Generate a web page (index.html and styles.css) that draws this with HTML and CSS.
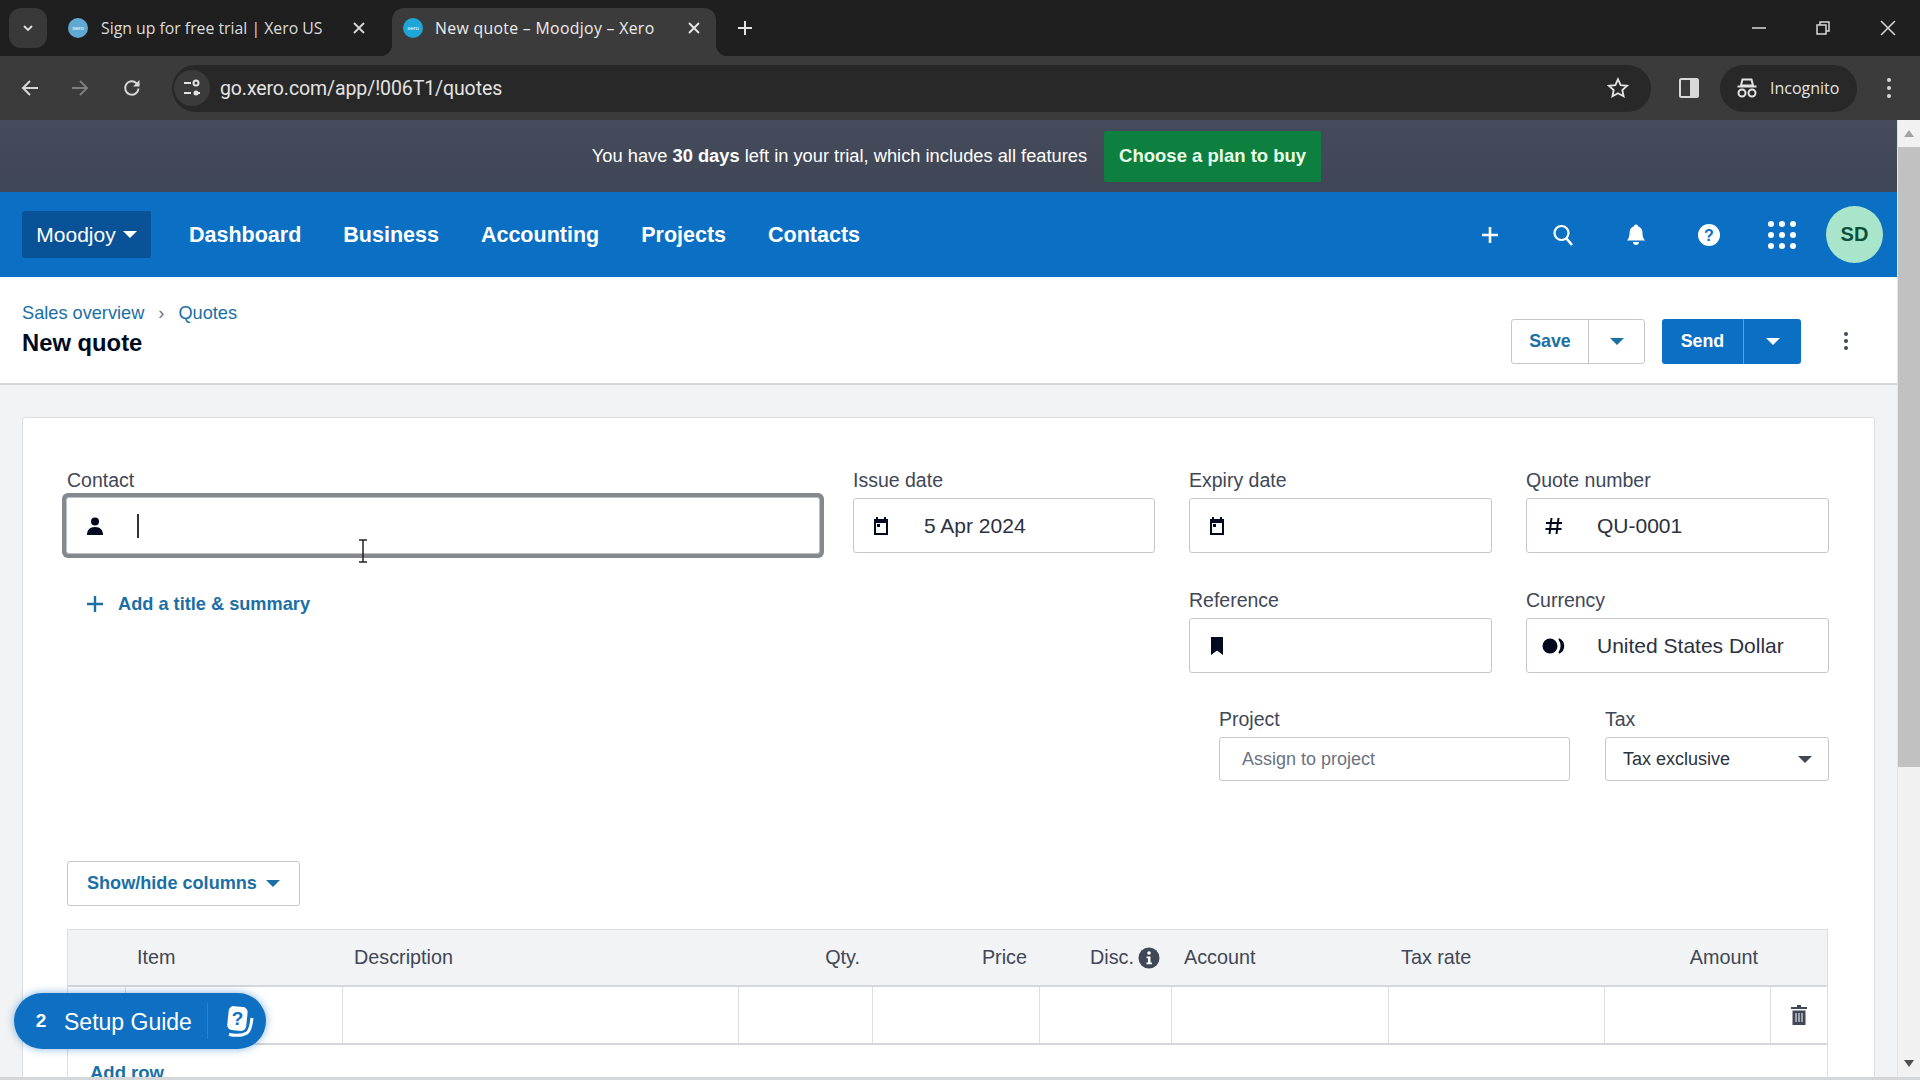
FILE: index.html
```html
<!DOCTYPE html>
<html lang="en">
<head>
<meta charset="utf-8">
<title>New quote – Moodjoy – Xero</title>
<link rel="stylesheet" href="styles.css">
</head>
<body>
<div class="tabstrip">
  <button class="tab-search"><svg width="14" height="14" viewBox="0 0 14 14"><path d="M3 5l4 4 4-4" fill="none" stroke="#e3e3e3" stroke-width="1.8"/></svg></button>
  <div class="tab tab-idle">
    <svg class="favicon" width="20" height="20" viewBox="0 0 20 20"><circle cx="10" cy="10" r="10" fill="#5fa9d2"/><text x="10" y="12" class="fav-text">xero</text></svg>
    <span class="tab-title">Sign up for free trial | Xero US</span>
    <svg class="tab-close" width="14" height="14" viewBox="0 0 14 14"><path d="M2 2l10 10M12 2L2 12" stroke="#d8d8d8" stroke-width="1.8"/></svg>
  </div>
  <div class="tab tab-active">
    <svg class="favicon" width="20" height="20" viewBox="0 0 20 20"><circle cx="10" cy="10" r="10" fill="#1ea6d8"/><text x="10" y="12" class="fav-text">xero</text></svg>
    <span class="tab-title">New quote – Moodjoy – Xero</span>
    <svg class="tab-close" width="14" height="14" viewBox="0 0 14 14"><path d="M2 2l10 10M12 2L2 12" stroke="#e8e8e8" stroke-width="1.8"/></svg>
  </div>
  <svg class="tab-new" width="16" height="16" viewBox="0 0 16 16"><path d="M8 1v14M1 8h14" stroke="#e3e3e3" stroke-width="2"/></svg>
  <div class="window-controls">
    <svg width="14" height="14" viewBox="0 0 14 14"><path d="M0 7h14" stroke="#d8d8d8" stroke-width="1.5"/></svg>
    <svg width="14" height="14" viewBox="0 0 14 14"><path d="M1 4h9v9H1zM4 4V1h9v9h-3" fill="none" stroke="#d8d8d8" stroke-width="1.5"/></svg>
    <svg width="16" height="16" viewBox="0 0 16 16"><path d="M1 1l14 14M15 1L1 15" stroke="#d8d8d8" stroke-width="1.5"/></svg>
  </div>
</div>

<div class="toolbar">
  <svg class="tool-back" width="20" height="20" viewBox="0 0 20 20"><path d="M18 10H3M10 3l-7 7 7 7" fill="none" stroke="#d8d8d8" stroke-width="2"/></svg>
  <svg class="tool-forward" width="20" height="20" viewBox="0 0 20 20"><path d="M2 10h15M10 3l7 7-7 7" fill="none" stroke="#7d7d7d" stroke-width="2"/></svg>
  <svg class="tool-reload" width="20" height="20" viewBox="0 0 20 20"><path d="M16.5 10.5a6.7 6.7 0 1 1-2-5.3L17 7.5" fill="none" stroke="#d8d8d8" stroke-width="2"/><path d="M17.5 2v6.5H11z" fill="#d8d8d8"/></svg>
  <div class="omnibox">
    <span class="site-icon"><svg width="20" height="20" viewBox="0 0 20 20"><path d="M2 5h7M2 15h7M12 15h6" stroke="#e3e3e3" stroke-width="2"/><circle cx="14" cy="5" r="2.5" fill="none" stroke="#e3e3e3" stroke-width="2"/><circle cx="14" cy="15" r="2.5" fill="#e3e3e3"/></svg></span>
    <span class="url">go.xero.com/app/!006T1/quotes</span>
    <svg class="star" width="22" height="22" viewBox="0 0 24 24"><path d="M12 2.5l2.9 6.3 6.9.8-5.1 4.7 1.4 6.8-6.1-3.4-6.1 3.4 1.4-6.8-5.1-4.7 6.9-.8z" fill="none" stroke="#e3e3e3" stroke-width="2"/></svg>
  </div>
  <svg class="side-panel" width="20" height="20" viewBox="0 0 20 20"><rect x="1" y="1" width="18" height="18" rx="1.5" fill="none" stroke="#d8d8d8" stroke-width="2"/><rect x="11" y="1" width="8" height="18" fill="#d8d8d8"/></svg>
  <div class="incognito">
    <svg width="22" height="22" viewBox="0 0 22 22"><path d="M6.5 2.5h9l1.5 6h-12zM1.500 9.500h19" fill="none" stroke="#e3e3e3" stroke-width="2"/><circle cx="6" cy="16" r="3.500" fill="none" stroke="#e3e3e3" stroke-width="2"/><circle cx="16" cy="16" r="3.500" fill="none" stroke="#e3e3e3" stroke-width="2"/></svg>
    <span>Incognito</span>
  </div>
  <svg class="chrome-menu" width="6" height="22" viewBox="0 0 6 22"><circle cx="3" cy="3" r="2" fill="#d8d8d8"/><circle cx="3" cy="11" r="2" fill="#d8d8d8"/><circle cx="3" cy="19" r="2" fill="#d8d8d8"/></svg>
</div>

<div class="viewport">
  <main class="page">
    <div class="trial-banner">
      <span class="trial-text">You have <b>30 days</b> left in your trial, which includes all features</span>
      <a class="trial-cta">Choose a plan to buy</a>
    </div>

    <nav class="app-nav">
      <button class="org-switch">Moodjoy<span class="caret caret-white"></span></button>
      <ul class="nav-links">
        <li>Dashboard</li>
        <li>Business</li>
        <li>Accounting</li>
        <li>Projects</li>
        <li>Contacts</li>
      </ul>
      <div class="nav-tools">
        <span class="nav-tool"><svg width="20" height="20" viewBox="0 0 20 20"><path d="M10 2v16M2 10h16" stroke="#fff" stroke-width="2.6"/></svg></span>
        <span class="nav-tool"><svg width="24" height="24" viewBox="0 0 24 24"><circle cx="10.500" cy="10" r="7" fill="none" stroke="#fff" stroke-width="2.200"/><path d="M15.500 15.500L21 22" stroke="#fff" stroke-width="2.600"/></svg></span>
        <span class="nav-tool"><svg width="22" height="24" viewBox="0 0 22 24"><path d="M11 1.500c1.200 0 2 .8 2 1.800 3 .9 4.500 3.500 4.500 7 0 4 1.200 5.700 2.500 7.200H2c1.300-1.500 2.500-3.200 2.500-7.200 0-3.500 1.500-6.100 4.500-7 0-1 .8-1.800 2-1.800zM8 19h6c0 1.800-1.300 3-3 3s-3-1.200-3-3z" fill="#fff"/></svg></span>
        <span class="nav-tool"><svg width="24" height="24" viewBox="0 0 24 24"><circle cx="12" cy="12" r="11" fill="#fff"/><text x="12" y="18" class="help-mark">?</text></svg></span>
        <span class="nav-tool"><svg width="30" height="30" viewBox="0 0 30 30" fill="#fff"><circle cx="4" cy="4" r="3"/><circle cx="15" cy="4" r="3"/><circle cx="26" cy="4" r="3"/><circle cx="4" cy="15" r="3"/><circle cx="15" cy="15" r="3"/><circle cx="26" cy="15" r="3"/><circle cx="4" cy="26" r="3"/><circle cx="15" cy="26" r="3"/><circle cx="26" cy="26" r="3"/></svg></span>
        <span class="avatar">SD</span>
      </div>
    </nav>

    <header class="page-head">
      <div class="page-title-block">
        <div class="breadcrumbs"><a>Sales overview</a><span class="crumb-sep">›</span><a>Quotes</a></div>
        <h1 class="page-title">New quote</h1>
      </div>
      <div class="page-actions">
        <div class="split split-light">
          <button class="split-main">Save</button>
          <button class="split-caret"><span class="caret caret-blue"></span></button>
        </div>
        <div class="split split-blue">
          <button class="split-main">Send</button>
          <button class="split-caret"><span class="caret caret-white"></span></button>
        </div>
        <svg class="kebab" width="6" height="20" viewBox="0 0 6 20"><circle cx="3" cy="3" r="2" fill="#404756"/><circle cx="3" cy="10" r="2" fill="#404756"/><circle cx="3" cy="17" r="2" fill="#404756"/></svg>
      </div>
    </header>

    <section class="card">
      <div class="form-grid">
        <div class="field contact-field">
          <label class="field-label">Contact</label>
          <div class="input input-focus">
            <span class="input-icon"><svg width="20" height="20" viewBox="0 0 20 20"><circle cx="10" cy="5.500" r="4" fill="#000a1e"/><path d="M2 19c0-5 2.500-8 8-8s8 3 8 8z" fill="#000a1e"/></svg></span>
            <span class="text-caret"></span>
          </div>
          <svg class="ibeam" width="12" height="24" viewBox="0 0 12 24"><path d="M2 1h8M2 23h8M6 1v22" fill="none" stroke="#222" stroke-width="1.500"/></svg>
        </div>
        <div class="field">
          <label class="field-label">Issue date</label>
          <div class="input">
            <span class="input-icon"><svg width="20" height="20" viewBox="0 0 20 20"><path d="M3 3h2V1h2v2h6V1h2v2h2v16H3z" fill="#000a1e"/><rect x="5" y="7" width="10" height="10" fill="#fff"/><rect x="6" y="8" width="3" height="3" fill="#000a1e"/></svg></span>
            <span class="input-value">5 Apr 2024</span>
          </div>
        </div>
        <div class="field">
          <label class="field-label">Expiry date</label>
          <div class="input">
            <span class="input-icon"><svg width="20" height="20" viewBox="0 0 20 20"><path d="M3 3h2V1h2v2h6V1h2v2h2v16H3z" fill="#000a1e"/><rect x="5" y="7" width="10" height="10" fill="#fff"/><rect x="6" y="8" width="3" height="3" fill="#000a1e"/></svg></span>
          </div>
        </div>
        <div class="field">
          <label class="field-label">Quote number</label>
          <div class="input">
            <span class="input-icon"><svg width="20" height="20" viewBox="0 0 20 20"><path d="M7.500 2L5.500 18M14.500 2l-2 16M2 7h16M1.500 13h16" fill="none" stroke="#000a1e" stroke-width="2"/></svg></span>
            <span class="input-value">QU-0001</span>
          </div>
        </div>

        <a class="add-summary"><svg width="18" height="18" viewBox="0 0 18 18"><path d="M9 1v16M1 9h16" stroke="#1a6fa5" stroke-width="2.400"/></svg>Add a title &amp; summary</a>
        <div class="field reference-field">
          <label class="field-label">Reference</label>
          <div class="input">
            <span class="input-icon"><svg width="20" height="20" viewBox="0 0 20 20"><path d="M4 1h12v18l-6-4.500L4 19z" fill="#000a1e"/></svg></span>
          </div>
        </div>
        <div class="field">
          <label class="field-label">Currency</label>
          <div class="input">
            <span class="input-icon"><svg width="24" height="20" viewBox="0 0 24 20"><circle cx="8" cy="10" r="7.500" fill="#000a1e"/><path d="M17 3c2.600 1.300 4.500 3.900 4.500 7s-1.900 5.700-4.500 7c1.500-2 2.300-4.400 2.300-7S18.500 5 17 3z" fill="#000a1e" stroke="#000a1e" stroke-width="1.500"/></svg></span>
            <span class="input-value">United States Dollar</span>
          </div>
        </div>

        <div class="project-row">
          <div class="field project-field">
            <label class="field-label">Project</label>
            <div class="input input-small"><span class="placeholder">Assign to project</span></div>
          </div>
          <div class="field tax-field">
            <label class="field-label">Tax</label>
            <div class="input input-small tax-select"><span>Tax exclusive</span><span class="caret caret-dark"></span></div>
          </div>
        </div>
      </div>

      <button class="columns-btn">Show/hide columns<span class="caret caret-blue"></span></button>

      <div class="items">
        <div class="items-row items-head">
          <div></div>
          <div class="cell">Item</div>
          <div class="cell">Description</div>
          <div class="cell cell-right">Qty.</div>
          <div class="cell cell-right">Price</div>
          <div class="cell cell-right cell-disc">Disc.<svg class="info" width="22" height="22" viewBox="0 0 22 22"><circle cx="11" cy="11" r="10.500" fill="#404756"/><circle cx="11" cy="6" r="1.800" fill="#fff"/><path d="M8.500 9.500h4v6h1.500v1.800H8.500v-1.800h1.500v-4.200H8.500z" fill="#fff"/></svg></div>
          <div class="cell cell-inset">Account</div>
          <div class="cell cell-inset">Tax rate</div>
          <div class="cell cell-right">Amount</div>
          <div></div>
        </div>
        <div class="items-row items-body">
          <div></div><div></div><div></div><div></div><div></div><div></div><div></div><div></div><div></div>
          <div class="cell-trash"><svg width="16" height="20" viewBox="0 0 16 20"><path d="M6 0h4v2h6v2H0V2h6z" fill="#404756"/><path d="M1.500 5.500h13V20h-13z" fill="#404756"/><path d="M5 8v9M8 8v9M11 8v9" stroke="#fff" stroke-width="1"/></svg></div>
        </div>
        <a class="add-row">Add row</a>
      </div>
    </section>

    <button class="setup-guide">
      <span class="setup-count">2</span>
      <span class="setup-text">Setup Guide</span>
      <span class="setup-icon"><svg width="30" height="32" viewBox="0 0 30 32"><path d="M5 29.500c8 1.500 14 1 18-1.500 2-1.500 4-6 5-15" fill="none" stroke="#fff" stroke-width="3"/><rect x="4" y="1.500" width="19" height="24" rx="5" transform="rotate(6 13 13)" fill="#fff"/><text x="13.500" y="20" class="setup-q">?</text></svg></span>
    </button>
  </main>

  <aside class="scrollbar">
    <span class="scroll-arrow"><span class="arrow-up"></span></span>
    <span class="scroll-thumb"></span>
    <span class="scroll-track"></span>
    <span class="scroll-arrow"><span class="arrow-down"></span></span>
  </aside>
</div>
<div class="bottom-strip"></div>
</body>
</html>
```

FILE: styles.css
```css
* { box-sizing: border-box; }
html, body { margin: 0; padding: 0; }
body {
  width: 1920px;
  height: 1080px;
  overflow: hidden;
  display: flex;
  flex-direction: column;
  background: #fff;
  font-family: "Liberation Sans", Arial, sans-serif;
  color: #000a1e;
}
button { font: inherit; margin: 0; border: 0; background: none; padding: 0; color: inherit; }
ul { margin: 0; padding: 0; list-style: none; }

/* browser chrome */
.tabstrip {
  height: 56px;
  flex: none;
  background: #1f1f1f;
  display: flex;
  align-items: flex-end;
  padding-left: 9px;
  font-family: "Open Sans", sans-serif;
  font-size: 15.800px;
  color: #dcdcdc;
}
.tab-search {
  width: 38px;
  height: 40px;
  margin-bottom: 8px;
  border-radius: 12px;
  background: #393939;
  display: flex;
  align-items: center;
  justify-content: center;
}
.tab {
  height: 48px;
  display: flex;
  align-items: center;
  padding-bottom: 8px;
}
.tab-idle { width: 345px; padding-left: 21px; padding-right: 26px; }
.tab-active {
  position: relative;
  width: 324px;
  padding-left: 11px;
  padding-right: 15px;
  background: #3b3b3b;
  border-radius: 12px 12px 0 0;
  color: #ececec;
}
.tab-active .tab-title { letter-spacing: 0.33px; }
.tab-active::before, .tab-active::after {
  content: "";
  position: absolute;
  bottom: 0;
  width: 12px;
  height: 12px;
}
.tab-active::before { left: -12px; background: radial-gradient(circle at 0 0, transparent 12px, #3b3b3b 12.500px); }
.tab-active::after { right: -12px; background: radial-gradient(circle at 100% 0, transparent 12px, #3b3b3b 12.500px); }
.favicon { flex: none; margin-right: 12px; }
.tab-idle .favicon { margin-right: 13px; }
.fav-text { font: 6px "Liberation Sans", sans-serif; fill: #fff; text-anchor: middle; }
.tab-title { flex: 1; white-space: nowrap; overflow: hidden; }
.tab-close { flex: none; }
.tab-new { margin: 0 0 20px 21px; }
.window-controls {
  margin-left: auto;
  width: 190px;
  height: 56px;
  display: flex;
  align-items: center;
  justify-content: space-between;
  padding: 0 24px 0 22px;
}

.toolbar {
  height: 64px;
  flex: none;
  background: #3b3b3b;
  display: flex;
  align-items: center;
  padding-left: 20px;
  font-family: "Open Sans", sans-serif;
  color: #e3e3e3;
}
.tool-forward { margin-left: 30px; }
.tool-reload { margin-left: 32px; }
.omnibox {
  margin-left: 30px;
  width: 1479px;
  height: 47px;
  border-radius: 24px;
  background: #282828;
  display: flex;
  align-items: center;
  padding-left: 2px;
  padding-right: 22px;
}
.site-icon {
  width: 36px;
  height: 36px;
  border-radius: 50%;
  background: #3b3b3b;
  display: flex;
  align-items: center;
  justify-content: center;
}
.url { margin-left: 10px; font-size: 19.500px; letter-spacing: -0.1px; color: #e3e3e3; font-family: Roboto, sans-serif; }
.star { margin-left: auto; }
.side-panel { margin-left: 28px; }
.incognito {
  margin-left: 21px;
  width: 137px;
  height: 47px;
  border-radius: 24px;
  background: #282828;
  display: flex;
  align-items: center;
  padding-left: 16px;
  gap: 12px;
  font-size: 16px;
  font-family: "Open Sans", sans-serif;
}
.chrome-menu { margin-left: 29px; }

/* layout */
.viewport { flex: 1; min-height: 0; display: flex; }
.page {
  flex: 1;
  min-width: 0;
  background: #f2f3f4;
  position: relative;
  overflow: hidden;
}
.bottom-strip { height: 3px; flex: none; background: #d5d6d8; }

/* trial banner */
.trial-banner {
  height: 72px;
  background: linear-gradient(#454b5b, #3f4655);
  color: #fff;
  display: flex;
  align-items: center;
  justify-content: center;
  gap: 17px;
  font-size: 18.300px;
  padding-left: 16px;
}
.trial-cta {
  width: 217px;
  height: 51px;
  background: #0d8040;
  color: #e9ffe9;
  font-weight: 700;
  font-size: 18.500px;
  display: flex;
  align-items: center;
  justify-content: center;
  border-radius: 2px;
}

/* app nav */
.app-nav {
  height: 85px;
  background: #0b6fc4;
  display: flex;
  align-items: center;
  padding-left: 22px;
  padding-right: 14px;
  color: #fff;
}
.org-switch {
  width: 129px;
  height: 47px;
  background: #0a5297;
  border-radius: 3px;
  font-size: 21px;
  color: #fff;
  display: flex;
  align-items: center;
  justify-content: center;
  gap: 7px;
}
.nav-links {
  display: flex;
  gap: 42px;
  margin-left: 38px;
  padding-top: 1px;
  font-size: 21.500px;
  font-weight: 700;
}
.nav-tools { margin-left: auto; display: flex; align-items: center; }
.nav-tool { width: 73px; display: flex; align-items: center; justify-content: center; }
.help-mark { font: 700 16px "Liberation Sans", sans-serif; fill: #0b6fc4; text-anchor: middle; }
.avatar {
  margin-left: 8px;
  width: 57px;
  height: 57px;
  border-radius: 50%;
  background: #a8e5cb;
  color: #0f4f3a;
  font-size: 20px;
  font-weight: 700;
  display: flex;
  align-items: center;
  justify-content: center;
}

.caret { display: inline-block; width: 0; height: 0; border-style: solid; border-width: 7px 7px 0; }
.caret-white { border-color: #fff transparent transparent; }
.caret-blue { border-color: #1a6fa5 transparent transparent; }
.caret-dark { border-color: #404756 transparent transparent; }

/* page head */
.page-head {
  height: 108px;
  background: #fff;
  border-bottom: 2px solid #d5d7da;
  display: flex;
  justify-content: space-between;
  padding: 0 48px 0 22px;
}
.page-title-block { padding-top: 25px; }
.breadcrumbs {
  height: 22px;
  line-height: 22px;
  font-size: 18.200px;
  color: #1a6fa5;
  display: flex;
  gap: 14px;
}
.crumb-sep { color: #6b7280; }
.page-title { margin: 5px 0 0; font-size: 23.800px; line-height: 28px; font-weight: 700; color: #000a1e; }
.page-actions { padding-top: 42px; display: flex; align-items: flex-start; }
.split { display: flex; height: 45px; border-radius: 3px; font-size: 17.800px; font-weight: 700; }
.split-main, .split-caret { display: flex; align-items: center; justify-content: center; height: 100%; }
.split-light { border: 1px solid #c4c7cc; color: #1a6fa5; background: #fff; }
.split-light .split-main { width: 77px; border-right: 1px solid #c4c7cc; }
.split-light .split-caret { width: 55px; }
.split-blue { margin-left: 17px; background: #0b6fc4; color: #fff; }
.split-blue .split-main { width: 82px; border-right: 1px solid #5b9fd8; }
.split-blue .split-caret { width: 57px; }
.kebab { margin: 12px 0 0 42px; }

/* card */
.card {
  margin: 32px 22px 0;
  background: #fff;
  border: 1px solid #dcdee1;
  border-radius: 3px;
  padding: 52px 45px 0 44px;
}
.form-grid {
  display: grid;
  grid-template-columns: 752px 302px 303px 303px;
  column-gap: 34px;
  row-gap: 37px;
}
.field { display: flex; flex-direction: column; min-width: 0; position: relative; }
.field-label { height: 20px; line-height: 20px; margin-bottom: 8px; font-size: 19.500px; color: #404756; }
.input {
  height: 55px;
  border: 1px solid #c4c7cc;
  border-radius: 3px;
  background: #fff;
  display: flex;
  align-items: center;
  font-size: 21px;
  color: #2a3140;
}
.input-focus { border-color: #fff; box-shadow: 0 0 0 1px #c0c2c6, 0 0 0 5px #85888d; border-radius: 2px; }
.input-icon {
  flex: none;
  width: 54px;
  margin-right: 16px;
  display: flex;
  align-items: center;
  justify-content: center;
}
.text-caret { width: 2px; height: 24px; margin-left: -1px; background: #333; }
.ibeam { position: absolute; left: 290px; top: 69px; }
.add-summary {
  align-self: start;
  padding-left: 19px;
  height: 28px;
  display: flex;
  align-items: center;
  gap: 14px;
  font-size: 18.200px;
  font-weight: 700;
  color: #1a6fa5;
}
.reference-field { grid-column: 3; }
.project-row { grid-column: 1 / -1; display: flex; justify-content: flex-end; gap: 35px; margin-top: -1px; }
.project-field { width: 351px; }
.tax-field { width: 224px; }
.input-small { height: 44px; font-size: 18px; }
.placeholder { padding-left: 22px; color: #6b7280; }
.tax-select { padding: 0 16px 0 17px; justify-content: space-between; color: #2a3140; }

.columns-btn {
  display: flex;
  align-items: center;
  gap: 9px;
  margin-top: 80px;
  width: 233px;
  height: 45px;
  padding-left: 19px;
  background: #fff;
  border: 1px solid #c4c7cc;
  border-radius: 3px;
  font-size: 18.100px;
  font-weight: 700;
  color: #1a6fa5;
}

/* line items */
.items { margin-top: 23px; border-left: 1px solid #dcdee1; border-right: 1px solid #dcdee1; width: 1761px; }
.items-row { display: grid; grid-template-columns: 58px 217px 396px 134px 167px 132px 217px 216px 166px 56px; height: 58px; }
.items-head {
  background: #f2f3f4;
  border-top: 1px solid #dcdee1;
  border-bottom: 2px solid #d5d7da;
  font-size: 19.800px;
  color: #404756;
}
.items-head .cell { padding: 0 12px 0 11px; display: flex; align-items: center; gap: 4px; }
.items-head .cell-right { justify-content: flex-end; padding-right: 13px; }
.items-head .cell-disc { padding-right: 12px; }
.items-head .cell-inset { padding-left: 12px; }
.info { flex: none; }
.items-body { border-bottom: 2px solid #d5d7da; }
.items-body > div { border-right: 1px solid #dcdee1; }
.items-body > .cell-trash { border-right: 0; display: flex; align-items: center; justify-content: center; }
.add-row { display: block; padding: 17px 0 0 22px; font-size: 18.500px; font-weight: 700; color: #1a6fa5; }

/* setup guide */
.setup-guide {
  position: absolute;
  left: 14px;
  top: 873px;
  width: 252px;
  height: 56px;
  border-radius: 28px;
  background: #0f70c3;
  color: #fff;
  display: flex;
  align-items: center;
  box-shadow: 0 0 8px rgba(10, 110, 200, .5);
}
.setup-count {
  width: 24px;
  margin-left: 15px;
  text-align: center;
  font-weight: 700;
  font-size: 19px;
}
.setup-text { margin-left: 11px; padding-top: 2px; font-size: 23px; }
.setup-icon {
  margin-left: 15px;
  padding-left: 16px;
  height: 36px;
  display: flex;
  align-items: center;
  border-left: 1px solid #2a83cf;
}
.setup-q { font: 700 19px "Liberation Sans", sans-serif; fill: #0f70c3; text-anchor: middle; }

/* scrollbar */
.scrollbar {
  width: 23px;
  flex: none;
  background: #f1f1f1;
  border-left: 1px solid #e3e4e6;
  display: flex;
  flex-direction: column;
  align-items: center;
}
.scroll-arrow { width: 100%; height: 27px; flex: none; display: flex; align-items: center; justify-content: center; }
.arrow-up, .arrow-down { width: 0; height: 0; border-style: solid; }
.arrow-up { border-width: 0 5px 7px; border-color: transparent transparent #a3a3a3; }
.arrow-down { border-width: 7px 5px 0; border-color: #505050 transparent transparent; }
.scroll-thumb { width: 100%; height: 620px; flex: none; background: #c1c1c1; }
.scroll-track { flex: 1; }
```
